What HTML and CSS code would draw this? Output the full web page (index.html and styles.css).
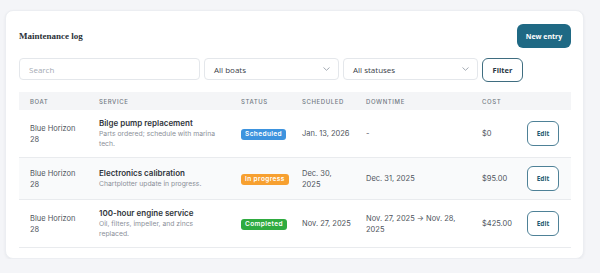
FILE: index.html
```html
<!DOCTYPE html>
<html lang="en">
<head>
    <meta charset="UTF-8">
    <meta name="viewport" content="width=device-width, initial-scale=1.0">
    <title>Maintenance log</title>
    <link rel="stylesheet" href="styles.css">
</head>
<body>
    <div class="card">
        <div class="card-header">
            <h2>Maintenance log</h2>
            <button class="btn-primary">New entry</button>
        </div>

        <form class="filters">
            <input type="text" class="search" placeholder="Search">
            <div class="select">
                <span>All boats</span>
                <svg width="7" height="4" viewBox="0 0 7 4"><path d="M0.5 0.5 L3.5 3.3 L6.5 0.5" fill="none" stroke="#9aa1ab" stroke-width="0.9"/></svg>
            </div>
            <div class="select">
                <span>All statuses</span>
                <svg width="7" height="4" viewBox="0 0 7 4"><path d="M0.5 0.5 L3.5 3.3 L6.5 0.5" fill="none" stroke="#9aa1ab" stroke-width="0.9"/></svg>
            </div>
            <button type="button" class="btn-outline">Filter</button>
        </form>

        <table class="log-table">
            <colgroup>
                <col style="width: 69px">
                <col style="width: 142px">
                <col style="width: 61px">
                <col style="width: 64px">
                <col style="width: 116px">
                <col style="width: 45px">
                <col style="width: 55px">
            </colgroup>
            <thead>
                <tr>
                    <th>Boat</th>
                    <th>Service</th>
                    <th>Status</th>
                    <th>Scheduled</th>
                    <th>Downtime</th>
                    <th>Cost</th>
                    <th></th>
                </tr>
            </thead>
            <tbody>
                <tr>
                    <td>Blue Horizon 28</td>
                    <td>
                        <div class="service-name">Bilge pump replacement</div>
                        <div class="service-note">Parts ordered; schedule with marina tech.</div>
                    </td>
                    <td><span class="badge scheduled">Scheduled</span></td>
                    <td class="nowrap">Jan. 13, 2026</td>
                    <td>-</td>
                    <td>$0</td>
                    <td><button class="btn-edit">Edit</button></td>
                </tr>
                <tr class="alt">
                    <td>Blue Horizon 28</td>
                    <td>
                        <div class="service-name">Electronics calibration</div>
                        <div class="service-note">Chartplotter update in progress.</div>
                    </td>
                    <td><span class="badge progress">In progress</span></td>
                    <td>Dec. 30,<br>2025</td>
                    <td>Dec. 31, 2025</td>
                    <td>$95.00</td>
                    <td><button class="btn-edit">Edit</button></td>
                </tr>
                <tr>
                    <td>Blue Horizon 28</td>
                    <td>
                        <div class="service-name">100-hour engine service</div>
                        <div class="service-note">Oil, filters, impeller, and zincs replaced.</div>
                    </td>
                    <td><span class="badge completed">Completed</span></td>
                    <td class="nowrap">Nov. 27, 2025</td>
                    <td>Nov. 27, 2025 → Nov. 28, 2025</td>
                    <td>$425.00</td>
                    <td><button class="btn-edit">Edit</button></td>
                </tr>
            </tbody>
        </table>
    </div>
</body>
</html>
```

FILE: styles.css
```css
body {
    font-family: Inter, 'DejaVu Sans', sans-serif;
    margin: 0;
    padding: 10px 16px 0 5px;
    background: #f4f5f8;
    color: #4b5159;
}
.card {
    background: #ffffff;
    border: 1px solid #eceef2;
    border-radius: 8px;
    box-shadow: 0 1px 3px rgba(20, 30, 50, 0.06);
    padding: 13px 12px 12px 13px;
    height: 222px;
}
.card-header {
    display: flex;
    justify-content: space-between;
    align-items: center;
    height: 24px;
}
.card-header h2 {
    margin: 0;
    font-family: 'Liberation Serif', 'DejaVu Serif', serif;
    font-size: 9px;
    font-weight: 700;
    color: #2b3037;
}
.btn-primary {
    font-family: 'Open Sans', 'Noto Sans', sans-serif;
    background: #1f6984;
    color: #ffffff;
    border: none;
    border-radius: 6px;
    width: 54px;
    height: 24px;
    font-size: 7px;
    font-weight: 700;
    padding: 0;
}
.filters {
    display: flex;
    align-items: flex-start;
    gap: 4px;
    margin-top: 10px;
}
.search,
.select {
    box-sizing: border-box;
    height: 22px;
    border: 1px solid #e4e7eb;
    border-radius: 4px;
    background: #ffffff;
    font-family: 'Open Sans', 'Noto Sans', sans-serif;
    font-size: 8px;
    color: #3a4048;
}
.search {
    width: 181px;
    padding: 0 9px;
    outline: none;
}
.search::placeholder {
    color: #a4aab3;
}
.select {
    width: 135px;
    display: flex;
    align-items: center;
    justify-content: space-between;
    padding: 0 8px 0 9px;
}
.btn-outline {
    font-family: 'Open Sans', 'Noto Sans', sans-serif;
    box-sizing: border-box;
    width: 41px;
    height: 24px;
    background: #ffffff;
    border: 1px solid #3f6d80;
    border-radius: 6px;
    color: #283844;
    font-size: 7.5px;
    font-weight: 700;
    padding: 0;
}
.log-table {
    width: 552px;
    table-layout: fixed;
    border-collapse: collapse;
    margin-top: 10px;
}
.log-table th {
    background: #f4f5f7;
    height: 18px;
    padding: 0 11px;
    text-align: left;
    font-size: 6px;
    font-weight: 500;
    letter-spacing: 0.6px;
    text-transform: uppercase;
    color: #737a84;
}
.log-table td {
    padding: 8px 11px;
    font-size: 7.5px;
    line-height: 11px;
    color: #4f555d;
    border-bottom: 1px solid #e9ebee;
    vertical-align: middle;
}
.log-table tr.alt td {
    background: #f9fafb;
}
.nowrap {
    white-space: nowrap;
}
.service-name {
    font-size: 8px;
    font-weight: 600;
    color: #30353c;
    line-height: 11px;
}
.service-note {
    font-size: 6.8px;
    line-height: 10px;
    color: #8b9099;
}
.badge {
    display: inline-block;
    padding: 0 4px;
    height: 11px;
    line-height: 11px;
    border-radius: 3px;
    color: #ffffff;
    font-size: 6.5px;
    font-weight: 600;
    letter-spacing: 0.4px;
    white-space: nowrap;
}
.badge.scheduled {
    background: #3d93de;
}
.badge.progress {
    background: #f7a030;
}
.badge.completed {
    background: #2fab40;
}
.btn-edit {
    font-family: 'Open Sans', 'Noto Sans', sans-serif;
    box-sizing: border-box;
    width: 32px;
    height: 25px;
    background: #ffffff;
    border: 1px solid #4e8197;
    border-radius: 6px;
    color: #1f5a70;
    font-size: 6.5px;
    font-weight: 700;
    padding: 0;
}
```
